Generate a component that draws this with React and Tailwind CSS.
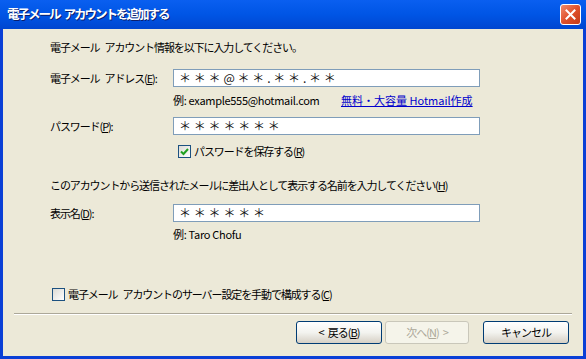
import React from "react";

const jp = "font-['Noto_Sans_CJK_JP',sans-serif]";

function Sp({ w = 5 }) {
  return <span className="inline-block" style={{ width: w }} />;
}

function Check({ checked }) {
  return (
    <span className="w-[13px] h-[13px] border border-[#1c5180] bg-gradient-to-br from-[#dcdbd5] to-white flex items-center justify-center shrink-0">
      {checked && (
        <svg width="9" height="9" viewBox="0 0 9 9">
          <path d="M1 4.5 L3.5 7 L8 2" stroke="#21a121" strokeWidth="2" fill="none" />
        </svg>
      )}
    </span>
  );
}

function Field({ label, stars }) {
  return (
    <div className="flex items-center h-[18px]">
      <span className="w-[123px] leading-[14px]">{label}</span>
      <div className="w-[307px] h-[18px] border border-[#7f9db9] bg-white flex items-center pl-[5px]">
        <span className="text-[12px] tracking-[2.8px] leading-none text-[#111]">{stars}</span>
      </div>
    </div>
  );
}

function Btn({ children, disabled, className = "" }) {
  return (
    <button
      className={`h-[23px] rounded-[3px] border text-[11px] tracking-[-1px] leading-none flex items-center justify-center ${
        disabled
          ? "border-[#c9c7ba] bg-[#f5f4ea] text-[#aca899]"
          : "border-[#003c74] bg-gradient-to-b from-white via-[#f3f3ef] to-[#d6d0c5] text-black"
      } ${className}`}
    >
      {children}
    </button>
  );
}

export default function App() {
  return (
    <div className={`w-[586px] h-[359px] bg-[#0a3fd6] flex flex-col overflow-hidden ${jp} text-[11px] tracking-[-1.1px] text-black`}>
      {/* Title bar */}
      <div className="h-[29px] flex items-center justify-between pl-[7px] pr-[5px] bg-gradient-to-b from-[#0a5ff0] via-[#0055e5] to-[#0046d0]">
        <span className="text-white font-bold text-[12.5px] tracking-[-2px] [text-shadow:1px_1px_0_#0a1e6e]">電子メール<Sp w={4} />アカウントを追加する</span>
        <div className="w-[21px] h-[21px] rounded-[3px] border border-white bg-gradient-to-br from-[#f08a6a] via-[#e0502a] to-[#c33a18] flex items-center justify-center">
          <svg width="11" height="11" viewBox="0 0 11 11">
            <path d="M1.5 1.5 L9.5 9.5 M9.5 1.5 L1.5 9.5" stroke="white" strokeWidth="2" strokeLinecap="square" />
          </svg>
        </div>
      </div>

      {/* Body */}
      <div className="flex-1 mx-[3px] mb-[3px] bg-[#ece9d8] flex flex-col">
        <div className="pl-[47px] flex flex-col">
          <p className="mt-[11px] leading-[14px]">電子メール<Sp />アカウント情報を以下に入力してください。</p>

          <div className="mt-[15px]">
            <Field label={<>電子メール<Sp />アドレス(<u>E</u>):</>} stars="＊＊＊@＊＊.＊＊.＊＊" />
          </div>

          <div className="mt-[6px] h-[14px] flex items-center pl-[123px] leading-[14px]">
            <span className="w-[168px] tracking-[-0.3px]">例: example555@hotmail.com</span>
            <span className="text-[#0000cc] underline tracking-[0px]">無料・大容量 Hotmail作成</span>
          </div>

          <div className="mt-[10px]">
            <Field label={<>パスワード(<u>P</u>):</>} stars="＊＊＊＊＊＊＊" />
          </div>

          <div className="mt-[9px] h-[14px] flex items-center gap-[3px] pl-[128px]">
            <Check checked />
            <span className="leading-[14px]">パスワードを保存する(<u>R</u>)</span>
          </div>

          <p className="mt-[20px] leading-[14px]">このアカウントから送信されたメールに差出人として表示する名前を入力してください(<u>H</u>)</p>

          <div className="mt-[12px]">
            <Field label={<>表示名(<u>D</u>):</>} stars="＊＊＊＊＊＊" />
          </div>

          <div className="mt-[5px] h-[14px] pl-[123px] leading-[14px] tracking-[-0.3px]">例: Taro Chofu</div>

          <div className="mt-[46px] h-[14px] flex items-center gap-[3px] pl-[2px]">
            <Check />
            <span className="leading-[14px]">電子メール<Sp />アカウントのサーバー設定を手動で構成する(<u>C</u>)</span>
          </div>
        </div>

        <div className="mt-[12px] mx-[11px] h-[2px] border-t border-[#aca899] border-b border-b-white" />

        <div className="mt-[6px] flex justify-end pr-[14px]">
          <Btn className="w-[86px]">&lt;<Sp w={4} />戻る(<u>B</u>)</Btn>
          <Btn disabled className="w-[84px] ml-[3px]">次へ(<u>N</u>)<Sp w={4} />&gt;</Btn>
          <Btn className="w-[86px] ml-[14px]">キャンセル</Btn>
        </div>
      </div>
    </div>
  );
}
